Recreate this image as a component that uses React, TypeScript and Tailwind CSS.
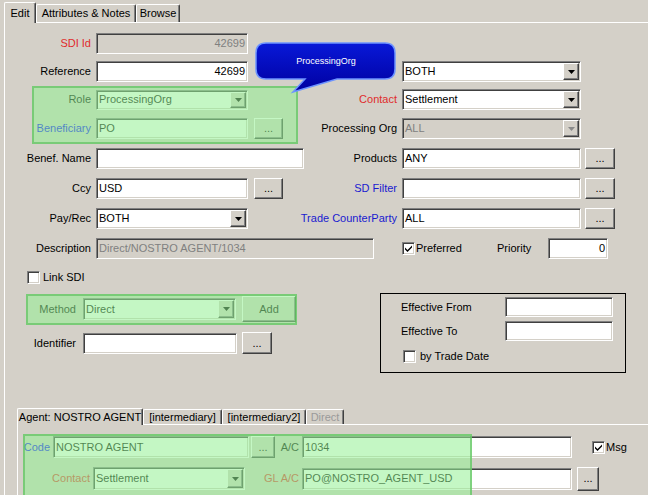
import type { ReactNode } from 'react';

const sunken =
  'border border-t-[#808080] border-l-[#808080] border-r-white border-b-white shadow-[inset_1px_1px_0_#404040,inset_-1px_-1px_0_#d4d0c8]';
const raised =
  'border border-t-white border-l-white border-r-[#404040] border-b-[#404040] shadow-[inset_-1px_-1px_0_#808080]';

const Label = ({
  children,
  className = '',
}: {
  children?: ReactNode;
  className?: string;
}) => (
  <span className={`shrink-0 flex justify-end whitespace-nowrap ${className}`}>
    <span className="shrink-0">{children}</span>
  </span>
);

const Field = ({
  className = '',
  value = '',
  right,
  disabled,
}: {
  className?: string;
  value?: string;
  right?: boolean;
  disabled?: boolean;
}) => (
  <div
    className={`${sunken} ${className} shrink-0 flex items-center px-[2px] overflow-hidden whitespace-nowrap ${
      disabled ? 'bg-[#d4d0c8] text-[#808080]' : 'bg-white'
    } ${right ? 'justify-end' : ''}`}
  >
    {value}
  </div>
);

const Select = ({
  className = '',
  value = '',
  disabled,
}: {
  className?: string;
  value?: string;
  disabled?: boolean;
}) => (
  <div
    className={`${sunken} ${className} shrink-0 flex items-stretch p-[1px] ${
      disabled ? 'bg-[#d4d0c8] text-[#808080]' : 'bg-white'
    }`}
  >
    <span className="flex-1 flex items-center pl-[1px] overflow-hidden whitespace-nowrap">
      {value}
    </span>
    <span
      className={`${raised} w-[16px] bg-[#d4d0c8] flex items-center justify-center`}
    >
      <svg width="7" height="4" viewBox="0 0 7 4">
        <path d="M0 0h7L3.5 4z" fill={disabled ? '#8a8a8a' : '#000'} />
      </svg>
    </span>
  </div>
);

const Btn = ({
  className = '',
  label = '...',
}: {
  className?: string;
  label?: string;
}) => (
  <div
    className={`${raised} ${className} shrink-0 bg-[#d4d0c8] flex items-center justify-center`}
  >
    {label}
  </div>
);

const Check = ({ checked }: { checked?: boolean }) => (
  <span
    className={`${sunken} w-[13px] h-[13px] bg-white flex items-center justify-center shrink-0`}
  >
    {checked && (
      <svg width="7" height="7" viewBox="0 0 7 7">
        <path d="M0 2.5 2.5 5 7 0.5V2.5L2.5 7 0 4.5z" fill="#000" />
      </svg>
    )}
  </span>
);

const Tab = ({
  children,
  className = '',
  selected,
  disabled,
}: {
  children: ReactNode;
  className?: string;
  selected?: boolean;
  disabled?: boolean;
}) => (
  <div
    className={`${className} relative shrink-0 bg-[#d4d0c8] border-t border-l border-white border-r border-r-[#404040] shadow-[inset_-1px_0_0_#808080] rounded-t-[2px] flex items-center justify-center whitespace-nowrap ${
      selected ? 'z-10 -mb-[1px]' : ''
    } ${disabled ? 'text-[#9a9a9a]' : ''}`}
  >
    {children}
  </div>
);

const red = 'text-[#e02c2c]';
const blue = 'text-[#1a1ad0]';

export default function App() {
  return (
    <div className="relative w-[648px] h-[495px] overflow-hidden bg-[#d4d0c8] text-[11px] leading-none text-black font-['Liberation_Sans',Arial,sans-serif]">
      {/* Top tabs */}
      <div className="flex items-end h-[22px] pl-[4px]">
        <Tab selected className="w-[32px] h-[21px]">
          Edit
        </Tab>
        <Tab className="w-[100px] h-[18px]">Attributes &amp; Notes</Tab>
        <Tab className="w-[44px] h-[18px]">Browse</Tab>
      </div>

      {/* Edit panel */}
      <div className="ml-[4px] h-[473px] border-l border-t border-white pt-[10px] flex flex-col">
        {/* SDI Id */}
        <div className="flex items-center h-[21px]">
          <div className="w-[305px] shrink-0 flex items-center">
            <Label className={`w-[86px] ${red}`}>SDI Id</Label>
            <Field className="ml-[5px] w-[152px] h-[21px]" value="42699" right disabled />
          </div>
        </div>

        {/* Reference */}
        <div className="mt-[7px] flex items-center h-[21px]">
          <div className="w-[305px] shrink-0 flex items-center">
            <Label className="w-[86px]">Reference</Label>
            <Field className="ml-[5px] w-[152px] h-[21px]" value="42699" right />
          </div>
          <div className="flex items-center">
            <Label className="w-[87px]" />
            <Select className="ml-[5px] w-[179px] h-[21px]" value="BOTH" />
          </div>
        </div>

        {/* Role */}
        <div className="mt-[7px] flex items-center h-[21px]">
          <div className="w-[305px] shrink-0 flex items-center">
            <Label className="w-[86px]">Role</Label>
            <Select className="ml-[5px] w-[152px] h-[20px]" value="ProcessingOrg" />
          </div>
          <div className="flex items-center">
            <Label className={`w-[87px] ${red}`}>Contact</Label>
            <Select className="ml-[5px] w-[179px] h-[21px]" value="Settlement" />
          </div>
        </div>

        {/* Beneficiary */}
        <div className="mt-[8px] flex items-center h-[21px]">
          <div className="w-[305px] shrink-0 flex items-center">
            <Label className="w-[86px] text-[#0000ff]">Beneficiary</Label>
            <Field className="ml-[5px] w-[152px] h-[21px]" value="PO" />
            <Btn className="ml-[6px] w-[29px] h-[21px]" />
          </div>
          <div className="flex items-center">
            <Label className="w-[87px]">Processing Org</Label>
            <Select className="ml-[5px] w-[179px] h-[21px]" value="ALL" disabled />
          </div>
        </div>

        {/* Benef. Name */}
        <div className="mt-[9px] flex items-center h-[21px]">
          <div className="w-[305px] shrink-0 flex items-center">
            <Label className="w-[86px]">Benef. Name</Label>
            <Field className="ml-[5px] w-[208px] h-[21px]" />
          </div>
          <div className="flex items-center">
            <Label className="w-[87px]">Products</Label>
            <Field className="ml-[5px] w-[179px] h-[21px]" value="ANY" />
            <Btn className="ml-[4px] w-[30px] h-[21px]" />
          </div>
        </div>

        {/* Ccy */}
        <div className="mt-[9px] flex items-center h-[21px]">
          <div className="w-[305px] shrink-0 flex items-center">
            <Label className="w-[86px]">Ccy</Label>
            <Field className="ml-[5px] w-[152px] h-[21px]" value="USD" />
            <Btn className="ml-[6px] w-[29px] h-[21px]" />
          </div>
          <div className="flex items-center">
            <Label className={`w-[87px] ${blue}`}>SD Filter</Label>
            <Field className="ml-[5px] w-[179px] h-[21px]" />
            <Btn className="ml-[4px] w-[30px] h-[21px]" />
          </div>
        </div>

        {/* Pay/Rec */}
        <div className="mt-[9px] flex items-center h-[21px]">
          <div className="w-[305px] shrink-0 flex items-center">
            <Label className="w-[86px]">Pay/Rec</Label>
            <Select className="ml-[5px] w-[152px] h-[21px]" value="BOTH" />
          </div>
          <div className="flex items-center">
            <Label className={`w-[87px] ${blue}`}>Trade CounterParty</Label>
            <Field className="ml-[5px] w-[179px] h-[21px]" value="ALL" />
            <Btn className="ml-[4px] w-[30px] h-[21px]" />
          </div>
        </div>

        {/* Description */}
        <div className="mt-[9px] flex items-center h-[21px]">
          <div className="w-[305px] shrink-0 flex items-center">
            <Label className="w-[86px]">Description</Label>
            <Field
              className="ml-[5px] w-[278px] h-[21px]"
              value="Direct/NOSTRO AGENT/1034"
              disabled
            />
          </div>
          <div className="pl-[92px] flex items-center">
            <div className="w-[95px] flex items-center">
              <Check checked />
              <span className="ml-[1px]">Preferred</span>
            </div>
            <span className="w-[51px]">Priority</span>
            <Field className="w-[60px] h-[21px]" value="0" right />
          </div>
        </div>

        {/* Link SDI */}
        <div className="mt-[12px] pl-[22px] flex items-center h-[13px]">
          <Check />
          <span className="ml-[3px]">Link SDI</span>
        </div>

        {/* Method / Identifier + Effective box */}
        <div className="mt-[9px] flex items-start">
          <div className="w-[375px] shrink-0 flex flex-col">
            <div className="mt-[3px] flex items-center h-[26px]">
              <Label className="w-[71px]">Method</Label>
              <Select className="ml-[7px] w-[153px] h-[22px]" value="Direct" />
              <Btn className="ml-[6px] w-[54px] h-[26px]" label="Add" />
            </div>
            <div className="mt-[10px] flex items-center h-[22px]">
              <Label className="w-[71px]">Identifier</Label>
              <Field className="ml-[7px] w-[154px] h-[21px]" />
              <Btn className="ml-[5px] w-[30px] h-[22px]" />
            </div>
          </div>
          <div className="w-[246px] h-[80px] shrink-0 border border-black pl-[20px] pt-[3px] flex flex-col">
            <div className="flex items-center h-[20px]">
              <span className="w-[104px]">Effective From</span>
              <Field className="w-[108px] h-[20px]" />
            </div>
            <div className="mt-[4px] flex items-center h-[20px]">
              <span className="w-[104px]">Effective To</span>
              <Field className="w-[108px] h-[20px]" />
            </div>
            <div className="mt-[9px] pl-[2px] flex items-center h-[13px]">
              <Check />
              <span className="ml-[4px]">by Trade Date</span>
            </div>
          </div>
        </div>

        {/* Agent tabs */}
        <div className="mt-[34px] ml-[12px] flex items-end h-[17px]">
          <Tab selected className="w-[126px] h-[17px]">
            Agent: NOSTRO AGENT
          </Tab>
          <Tab className="w-[79px] h-[15px]">[intermediary]</Tab>
          <Tab className="w-[84px] h-[15px]">[intermediary2]</Tab>
          <Tab className="w-[38px] h-[15px]" disabled>
            Direct
          </Tab>
        </div>
        <div className="ml-[12px] flex-1 border-l border-t border-white pt-[11px] flex flex-col">
          <div className="flex items-center h-[22px]">
            <Label className="w-[32px] text-[#0000ff]">Code</Label>
            <Field className="ml-[3px] w-[196px] h-[22px]" value="NOSTRO AGENT" />
            <Btn className="ml-[2px] w-[24px] h-[22px]" />
            <Label className="w-[24px]">A/C</Label>
            <Field className="ml-[3px] w-[270px] h-[22px]" value="1034" />
            <span className="ml-[20px]">
              <Check checked />
            </span>
            <span className="ml-[1px]">Msg</span>
          </div>
          <div className="mt-[9px] flex items-center h-[23px]">
            <Label className={`w-[72px] ${red}`}>Contact</Label>
            <Select className="ml-[3px] w-[152px] h-[23px]" value="Settlement" />
            <Label className={`w-[54px] ${red}`}>GL A/C</Label>
            <Field
              className="ml-[3px] w-[270px] h-[22px]"
              value="PO@NOSTRO_AGENT_USD"
            />
            <Btn className="ml-[5px] w-[22px] h-[24px]" />
          </div>
        </div>
      </div>

      {/* Highlight overlays */}
      <div className="absolute left-[32px] top-[86px] w-[266px] h-[58px] bg-[rgba(148,240,148,0.55)] border-2 border-[rgba(90,190,90,0.65)]" />
      <div className="absolute left-[26px] top-[294px] w-[271px] h-[31px] bg-[rgba(148,240,148,0.55)] border-2 border-[rgba(90,190,90,0.65)]" />
      <div className="absolute left-[23px] top-[434px] w-[449px] h-[70px] bg-[rgba(148,240,148,0.55)] border-2 border-[rgba(90,190,90,0.65)]" />

      {/* Callout bubble */}
      <svg
        className="absolute left-[254px] top-[41px]"
        width="146"
        height="54"
        viewBox="0 0 146 54"
      >
        <defs>
          <linearGradient id="bubble" x1="0" y1="0" x2="0" y2="1">
            <stop offset="0" stopColor="#0818d8" />
            <stop offset="1" stopColor="#0000a0" />
          </linearGradient>
        </defs>
        <path
          d="M12 2H131Q141 2 141 12V28Q141 38 131 38H83L39 51L51 38H12Q2 38 2 28V12Q2 2 12 2Z"
          fill="url(#bubble)"
          stroke="#6c92ff"
          strokeWidth="1.5"
        />
        <text
          x="72"
          y="23"
          textAnchor="middle"
          fill="#ffffff"
          fontSize="9"
          fontFamily="Liberation Sans, Arial, sans-serif"
        >
          ProcessingOrg
        </text>
      </svg>
    </div>
  );
}
